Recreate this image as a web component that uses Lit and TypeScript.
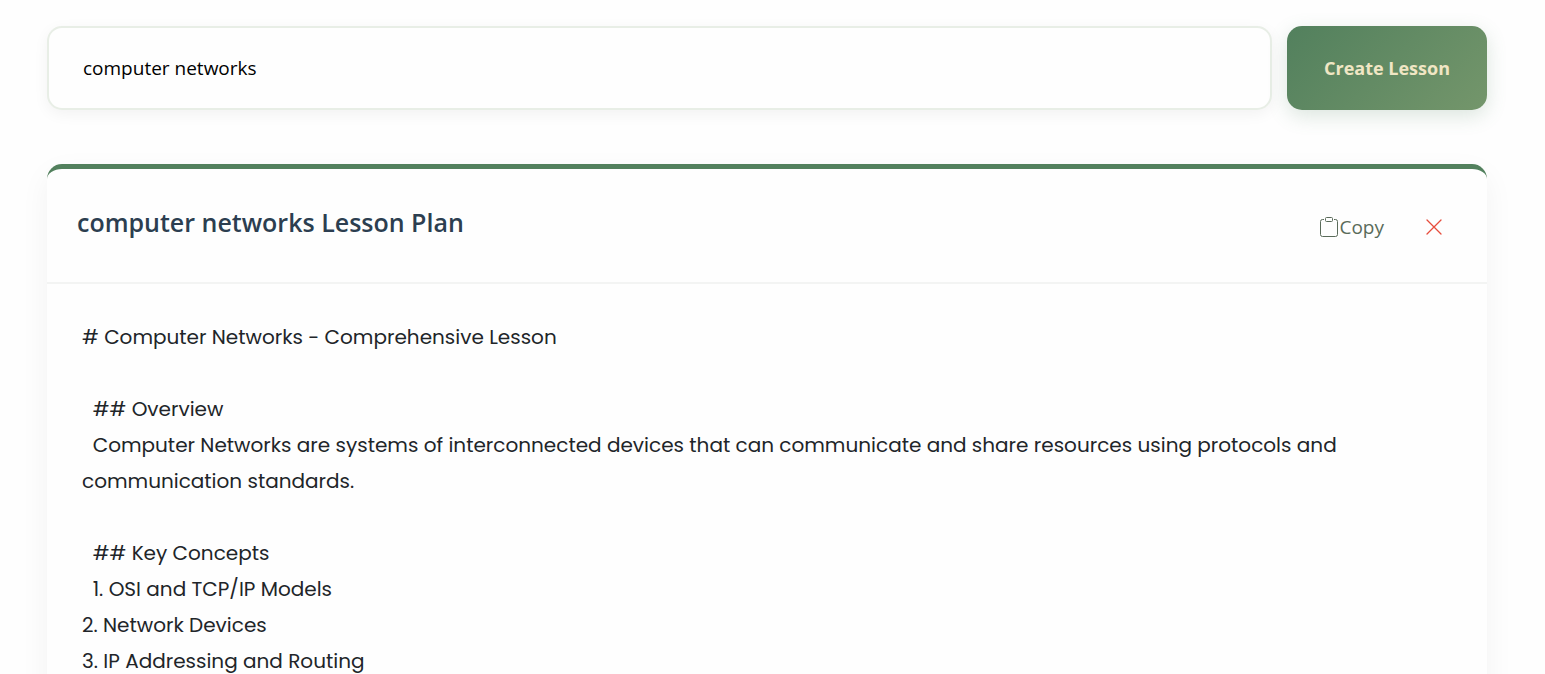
import { LitElement, html, css } from "lit";
import { customElement, state } from "lit/decorators.js";

const LESSON = [
  "# Computer Networks - Comprehensive Lesson",
  "",
  "  ## Overview",
  "  Computer Networks are systems of interconnected devices that can communicate and share resources using protocols and communication standards.",
  "",
  "  ## Key Concepts",
  "  1. OSI and TCP/IP Models",
  "2. Network Devices",
  "3. IP Addressing and Routing",
].join("\n");

@customElement("app-root")
export class AppRoot extends LitElement {
  @state() private topic = "computer networks";

  static styles = css`
    :host {
      display: block;
      box-sizing: border-box;
      height: 100vh;
      overflow: hidden;
      padding: 26px 58px 0 47px;
      background: #fefefe;
      color: #212529;
      font-family: "Segoe UI", "Open Sans", "Noto Sans", sans-serif;
      font-size: 19px;
    }
    * {
      box-sizing: border-box;
    }
    button {
      font: inherit;
      border: 0;
      background: none;
      cursor: pointer;
    }
    .search {
      display: flex;
      gap: 15px;
      margin-bottom: 54px;
    }
    .topic {
      flex: 1;
      min-width: 0;
      height: 84px;
      padding: 0 34px;
      border: 2px solid #e8eee6;
      border-radius: 15px;
      background: #fefefe;
      box-shadow: 0 4px 15px rgba(0, 0, 0, 0.05);
      font: inherit;
      color: #000;
      outline: none;
    }
    .create {
      width: 200px;
      padding: 0;
      border-radius: 15px;
      background: linear-gradient(135deg, #52805d, #74966b);
      box-shadow: 0 6px 20px rgba(82, 128, 93, 0.2);
      color: #f0e6c4;
      font-size: 18px;
      font-weight: 700;
    }
    .card {
      border-top: 5px solid #52805d;
      border-radius: 15px;
      background: #fefefe;
      box-shadow: 0 10px 30px rgba(0, 0, 0, 0.05);
    }
    .head {
      display: flex;
      align-items: flex-start;
      justify-content: space-between;
      height: 115px;
      padding: 33px 30px;
      border-bottom: 2px solid #f3f4f3;
    }
    h2 {
      margin: 0;
      font-size: 25px;
      line-height: 40px;
      font-weight: 600;
      color: #2c3e50;
    }
    .actions {
      display: flex;
      gap: 14px;
      padding-top: 5px;
    }
    .action {
      display: flex;
      align-items: center;
      height: 40px;
      padding: 0 13px;
      color: #5a6b5a;
    }
    .close {
      color: #e74c3c;
    }
    .icon {
      display: block;
      width: 20px;
      height: 20px;
    }
    .lesson {
      padding: 35px;
      white-space: pre-wrap;
      font-family: Poppins, Inter, sans-serif;
      font-size: 20px;
      line-height: 36px;
    }
  `;

  private onInput(e: Event) {
    this.topic = (e.target as HTMLInputElement).value;
  }

  render() {
    return html`
      <form class="search" @submit=${(e: Event) => e.preventDefault()}>
        <input class="topic" type="text" aria-label="Lesson topic" .value=${this.topic} @input=${this.onInput} />
        <button class="create" type="submit">Create Lesson</button>
      </form>
      <article class="card">
        <header class="head">
          <h2>computer networks Lesson Plan</h2>
          <div class="actions">
            <button class="action" type="button">
              <svg class="icon" viewBox="0 0 20 20" fill="none" stroke="currentColor" aria-hidden="true">
                <path d="M5 2.5H3.5a2 2 0 0 0-2 2v13a2 2 0 0 0 2 2h13a2 2 0 0 0 2-2v-13a2 2 0 0 0-2-2H15" />
                <rect x="6.5" y="0.5" width="7" height="4" rx="1" />
              </svg>
              <span>Copy</span>
            </button>
            <button class="action close" type="button" aria-label="Close">
              <svg class="icon" viewBox="0 0 20 20" fill="none" stroke="currentColor" stroke-width="1.3" stroke-linecap="round" aria-hidden="true">
                <path d="M3 3l14 14M17 3L3 17" />
              </svg>
            </button>
          </div>
        </header>
        <div class="lesson">${LESSON}</div>
      </article>
    `;
  }
}
